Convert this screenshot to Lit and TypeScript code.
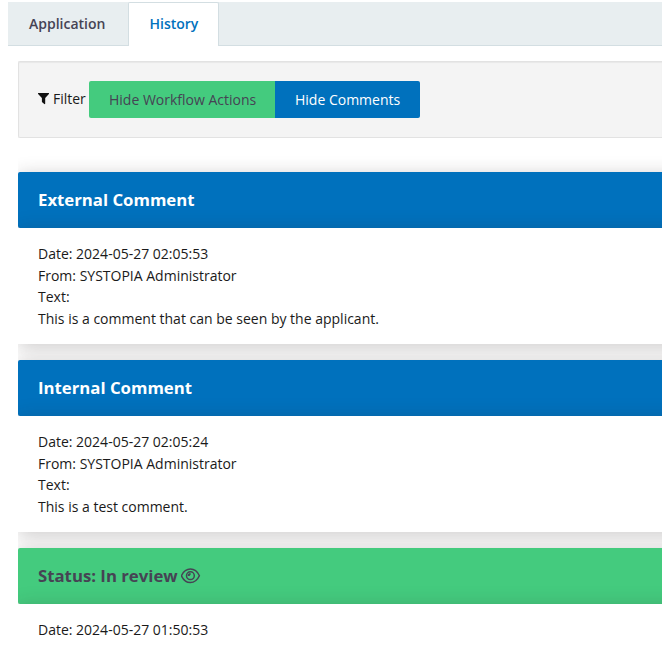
import { LitElement, html, css, nothing } from "lit";
import { customElement, property } from "lit/decorators.js";

interface Entry {
  title: string;
  kind: "comment" | "status";
  date: string;
  from?: string;
  text?: string;
}

const entries: Entry[] = [
  {
    title: "External Comment",
    kind: "comment",
    date: "2024-05-27 02:05:53",
    from: "SYSTOPIA Administrator",
    text: "This is a comment that can be seen by the applicant.",
  },
  {
    title: "Internal Comment",
    kind: "comment",
    date: "2024-05-27 02:05:24",
    from: "SYSTOPIA Administrator",
    text: "This is a test comment.",
  },
  { title: "Status: In review", kind: "status", date: "2024-05-27 01:50:53" },
];

@customElement("history-entry")
class HistoryEntry extends LitElement {
  @property({ attribute: false }) entry!: Entry;

  static styles = css`
    :host {
      display: block;
      margin-bottom: 16px;
    }
    .head {
      box-sizing: border-box;
      height: 56px;
      padding: 0 20px 1px;
      display: flex;
      align-items: center;
      gap: 3px;
      border-radius: 2px;
      font-size: 16.75px;
      font-weight: 700;
      box-shadow: 0 3px 18px 0 rgba(48, 40, 40, 0.25);
    }
    .comment {
      background: #0071bd;
      color: #fff;
    }
    .status {
      background: #44cb7e;
      color: #464354;
    }
    .body {
      box-sizing: border-box;
      min-height: 116px;
      padding: 15px 20px 14px;
      background: #fff;
      line-height: 21.6px;
      box-shadow: 0 3px 18px 0 rgba(48, 40, 40, 0.25);
    }
    .eye {
      width: 20px;
      height: 16px;
    }
  `;

  render() {
    const e = this.entry;
    return html`
      <div class="head ${e.kind}">
        <span>${e.title}</span>
        ${e.kind === "status"
          ? html`<svg class="eye" viewBox="0.6 0 20 16" fill="none" stroke="currentColor" stroke-width="1.5">
              <path d="M1 7.800C3.100 3.300 6.300 1.100 10 1.100s6.900 2.200 9 6.700c-2.100 4.500-5.300 6.700-9 6.700S3.100 12.300 1 7.800Z" />
              <circle cx="10" cy="7.700" r="3.900" />
              <path stroke-width="1.9" d="M8.300 7.900c0-1.200.7-1.900 1.900-1.900" />
            </svg>`
          : nothing}
      </div>
      <div class="body">
        <div>Date: ${e.date}</div>
        ${e.from ? html`<div>From: ${e.from}</div>` : nothing}
        ${e.text ? html`<div>Text:</div><div>${e.text}</div>` : nothing}
      </div>
    `;
  }
}

@customElement("app-root")
class AppRoot extends LitElement {
  static styles = css`
    :host {
      display: block;
      box-sizing: border-box;
      height: 662px;
      overflow: hidden;
      padding: 2px 0 0 8px;
      background: #fff;
      color: #1a1a1a;
      font: 14px/21.6px "Open Sans", "Noto Sans", sans-serif;
    }
    .tabs {
      box-sizing: border-box;
      display: flex;
      height: 44px;
      background: #e8eef0;
      border-bottom: 1px solid #d3dee2;
    }
    .tab {
      box-sizing: border-box;
      height: 44px;
      padding: 0 20px;
      border: 1px solid transparent;
      line-height: 42px;
      font-weight: 600;
      color: #464354;
    }
    .tab + .tab {
      margin-left: 2px;
    }
    .tab.active {
      background: #fff;
      color: #0071bd;
      border-color: #d3dee2;
      border-bottom: 0;
      border-radius: 2px 2px 0 0;
    }
    .filter {
      box-sizing: border-box;
      display: flex;
      align-items: flex-start;
      height: 77px;
      margin: 15px 0 0 10px;
      padding: 19px 19px 0;
      background: #f4f4f4;
      border: 1px solid #e2e2e2;
      border-right: 0;
      border-radius: 2px 0 0 2px;
      box-shadow: inset 0 1px 1px rgba(0, 0, 0, 0.05);
    }
    .label {
      display: flex;
      align-items: center;
      gap: 4px;
      width: 51px;
      height: 35px;
      white-space: nowrap;
      font-size: 13.97px;
    }
    .funnel {
      flex: none;
      width: 11px;
      height: 12px;
    }
    .btn {
      height: 37px;
      padding: 0 20px;
      border: 0;
      font: inherit;
      white-space: nowrap;
    }
    .workflow {
      width: 186px;
      background: #44cb7e;
      color: #464354;
      border-radius: 2px 0 0 2px;
    }
    .comments {
      width: 145px;
      background: #0071bd;
      color: #fff;
      border-radius: 0 2px 2px 0;
    }
    .history {
      overflow: hidden;
      margin: 0 -60px 0 10px;
      padding-top: 34px;
    }
  `;

  render() {
    return html`
      <div class="tabs">
        <div class="tab">Application</div>
        <div class="tab active">History</div>
      </div>
      <div class="filter">
        <span class="label">
          <svg class="funnel" viewBox="0 0 11 12" fill="#111">
            <path d="M.4 0h10.200c.5 0 .6.600.3.900L7.200 4.900v5.700c0 .5-.5.700-.9.400L4.200 9.300C4 9.100 3.900 9 3.900 8.700V4.900L.1.900C-.2.600 0 0 .4 0Z" />
          </svg>
          Filter
        </span>
        <button class="btn workflow">Hide Workflow Actions</button>
        <button class="btn comments">Hide Comments</button>
      </div>
      <div class="history">
        ${entries.map((e) => html`<history-entry .entry=${e}></history-entry>`)}
      </div>
    `;
  }
}
